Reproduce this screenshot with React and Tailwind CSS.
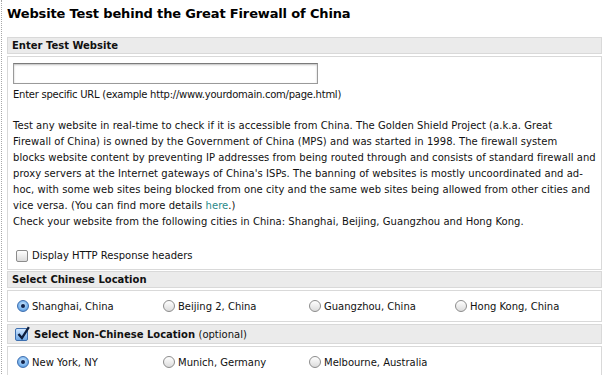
import React from 'react';

const Radio = ({ checked }) => (
  <span
    className={
      'inline-block w-[12px] h-[12px] rounded-full border shrink-0 relative ' +
      (checked
        ? 'border-[#3d6fb0] bg-[radial-gradient(circle_at_50%_40%,#d6ecff_0%,#7fb7ee_55%,#3f82d0_100%)]'
        : 'border-[#8c8c8c] bg-[linear-gradient(#ffffff,#dcdcdc)]')
    }
  >
    {checked && <span className="absolute left-[3px] top-[3px] w-[4px] h-[4px] rounded-full bg-[#10224a]" />}
  </span>
);

const Checkbox = ({ checked }) =>
  checked ? (
    <span className="inline-block w-[13px] h-[13px] rounded-[2px] border border-[#3d6fb0] bg-[linear-gradient(#cfe6ff,#6fa8e6)] shrink-0 relative">
      <svg viewBox="0 0 13 13" className="absolute -left-px -top-[3px] w-[15px] h-[15px]">
        <path d="M3 7 L6 10.5 L12 1" fill="none" stroke="#0d1d3c" strokeWidth="2" />
      </svg>
    </span>
  ) : (
    <span className="inline-block w-[12px] h-[12px] rounded-[2px] border border-[#8c8c8c] bg-[linear-gradient(#ffffff,#dcdcdc)] shrink-0" />
  );

const Header = ({ children, className = '' }) => (
  <div className={'border border-[#d9d9d9] bg-[#ebebeb] px-[4px] flex items-center font-bold text-[10px] ' + className}>
    {children}
  </div>
);

const Option = ({ label, checked }) => (
  <label className="flex items-center gap-[3px] w-[146px]">
    <Radio checked={checked} />
    <span>{label}</span>
  </label>
);

const lines = [
  'Test any website in real-time to check if it is accessible from China. The Golden Shield Project (a.k.a. Great',
  'Firewall of China) is owned by the Government of China (MPS) and was started in 1998. The firewall system',
  'blocks website content by preventing IP addresses from being routed through and consists of standard firewall and',
  "proxy servers at the Internet gateways of China's ISPs. The banning of websites is mostly uncoordinated and ad-",
  'hoc, with some web sites being blocked from one city and the same web sites being allowed from other cities and',
];

const App = () => {
  return (
    <div className="min-h-screen bg-white ml-px border-l border-dotted border-[#a8a8a8] pl-[5px] pr-[7px] font-['DejaVu_Sans',Verdana,sans-serif] text-[10px] text-[#111]">
      <h1 className="pt-[5px] h-[37px] text-[13px] font-bold leading-[17px] tracking-[-0.15px] text-black">
        Website Test behind the Great Firewall of China
      </h1>

      <Header className="h-[17px]">Enter Test Website</Header>
      <div className="mt-[2px] border border-[#d9d9d9] px-[5px] pt-[6px] h-[214px]">
        <input
          type="text"
          className="block w-[305px] h-[21px] border border-[#9a9a9a] border-t-[#7a7a7a] shadow-[inset_0_1px_2px_rgba(0,0,0,0.25)] bg-white"
        />
        <p className="leading-[16px] mt-[3px] tracking-[-0.25px]">
          Enter specific URL (example http://www.yourdomain.com/page.html)
        </p>
        <div className="leading-[16px] mt-[15px] whitespace-nowrap tracking-[0.05px]">
          {lines.map((l) => (
            <div key={l}>{l}</div>
          ))}
          <div>
            vice versa. (You can find more details <a className="text-[#2b8a8a]">here</a>.)
          </div>
          <div>Check your website from the following cities in China: Shanghai, Beijing, Guangzhou and Hong Kong.</div>
        </div>
        <label className="flex items-center gap-[4px] mt-[18px] ml-[3px]">
          <Checkbox />
          <span>Display HTTP Response headers</span>
        </label>
      </div>

      <Header className="mt-[1px] h-[17px]">Select Chinese Location</Header>
      <div className="mt-[2px] border border-[#d9d9d9] h-[32px] flex items-center pl-[9px]">
        <Option label="Shanghai, China" checked />
        <Option label="Beijing 2, China" />
        <Option label="Guangzhou, China" />
        <Option label="Hong Kong, China" />
      </div>

      <Header className="mt-[2px] h-[20px] gap-[6px] pl-[7px]">
        <Checkbox checked />
        <span>
          Select Non-Chinese Location <span className="font-normal">(optional)</span>
        </span>
      </Header>
      <div className="mt-[2px] border border-[#d9d9d9] h-[32px] flex items-center pl-[9px]">
        <Option label="New York, NY" checked />
        <Option label="Munich, Germany" />
        <Option label="Melbourne, Australia" />
      </div>
    </div>
  );
};

export default App;
